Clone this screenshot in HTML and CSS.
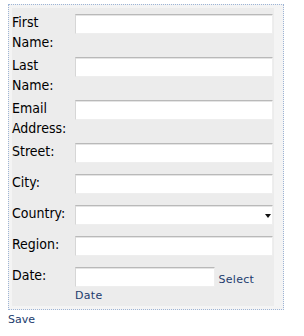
FILE: index.html
```html
<!DOCTYPE html>
<html lang="en">
<head>
    <meta charset="UTF-8">
    <meta name="viewport" content="width=device-width, initial-scale=1.0">
    <title>Address Form</title>
    <link rel="stylesheet" href="styles.css">
</head>
<body>
    <div class="container">
        <form class="form-table" id="addressForm">
            <div class="row">
                <label class="label" for="firstName">First Name:</label>
                <div class="field"><input type="text" id="firstName" class="text-input"></div>
            </div>
            <div class="row">
                <label class="label" for="lastName">Last Name:</label>
                <div class="field"><input type="text" id="lastName" class="text-input"></div>
            </div>
            <div class="row">
                <label class="label" for="email">Email Address:</label>
                <div class="field"><input type="text" id="email" class="text-input"></div>
            </div>
            <div class="row">
                <label class="label" for="street">Street:</label>
                <div class="field"><input type="text" id="street" class="text-input"></div>
            </div>
            <div class="row">
                <label class="label" for="city">City:</label>
                <div class="field"><input type="text" id="city" class="text-input"></div>
            </div>
            <div class="row">
                <label class="label" for="country">Country:</label>
                <div class="field">
                    <span class="select-wrap">
                        <select id="country" class="select-input">
                            <option value=""></option>
                        </select>
                    </span>
                </div>
            </div>
            <div class="row">
                <label class="label" for="region">Region:</label>
                <div class="field"><input type="text" id="region" class="text-input"></div>
            </div>
            <div class="row">
                <label class="label" for="date">Date:</label>
                <div class="field field-date"><input type="text" id="date" class="text-input date-input"> <a class="link" href="#">Select Date</a></div>
            </div>
        </form>
    </div>
    <a class="link save-link" href="#">Save</a>
</body>
</html>
```

FILE: styles.css
```css
body {
    margin: 0 0 0 8px;
    padding: 0;
    background-color: #fff;
    font-family: "DejaVu Sans", Verdana, sans-serif;
}
.container {
    width: 276px;
    margin-top: 4px;
    box-sizing: border-box;
    border: 1px dotted #9db4d6;
    padding: 3px 9px 3px 3px;
    background-color: #f4f4f4;
}
.form-table {
    background-color: #ececec;
    padding: 3px 0 1px 0;
    margin: 0;
}
.row {
    display: flex;
    align-items: flex-start;
    padding: 2px 0;
}
.label {
    width: 63px;
    flex-shrink: 0;
    font-family: "DejaVu Sans Condensed", "DejaVu Sans", sans-serif;
    font-stretch: condensed;
    font-size: 14px;
    line-height: 19.5px;
    color: #000;
}
.field {
    flex: 1;
    font-size: 11px;
    line-height: 15px;
}
.text-input,
.select-input {
    display: block;
    width: 198px;
    height: 20px;
    margin: 1px 0 6px 0;
    padding: 0 3px;
    box-sizing: border-box;
    background-color: #fff;
    border: 1px solid #eeeeee;
    border-top-color: #b9b9b9;
    border-left-color: #d6d6d6;
    box-shadow: inset 0 1px 0 #e4e4e4;
    font-family: "DejaVu Sans", sans-serif;
    font-size: 12px;
    outline: none;
}
.select-wrap {
    position: relative;
    display: block;
    width: 198px;
}
.select-input {
    appearance: none;
    -webkit-appearance: none;
    border-radius: 0;
}
.select-wrap::after {
    content: "";
    position: absolute;
    left: 190px;
    top: 9px;
    border-left: 3px solid transparent;
    border-right: 3px solid transparent;
    border-top: 4px solid #111;
}
.field-date .date-input {
    display: inline-block;
    width: 140px;
    margin: 1px 0;
    vertical-align: 2px;
}
.link {
    color: #1d3c6e;
    text-decoration: none;
    font-size: 11px;
    letter-spacing: 0.3px;
}
.save-link {
    display: block;
    margin-top: 2px;
    line-height: 15px;
    letter-spacing: 0;
}
```
